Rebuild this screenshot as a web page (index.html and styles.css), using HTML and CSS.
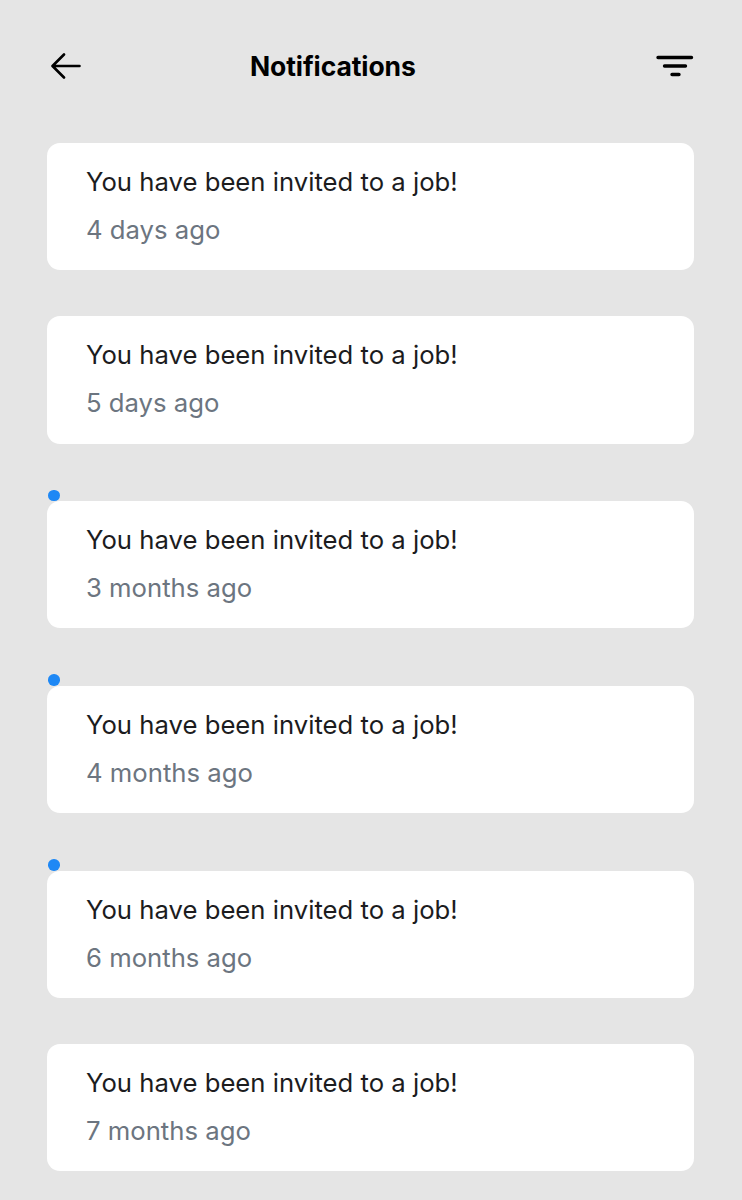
FILE: index.html
```html
<!DOCTYPE html>
<html lang="en">
<head>
  <meta charset="UTF-8" />
  <meta name="viewport" content="width=device-width, initial-scale=1" />
  <title>Notifications</title>
  <link rel="stylesheet" href="styles.css">
</head>
<body>
  <header class="topbar">
    <button class="icon-btn back" type="button" aria-label="Back">
      <svg width="30" height="26" viewBox="0 0 30 26" fill="none" stroke="#000" stroke-width="2.6" stroke-linecap="round" stroke-linejoin="round">
        <path d="M28.5 13H2M13 1.5L1.5 13L13 24.5" />
      </svg>
    </button>
    <h1>Notifications</h1>
    <button class="icon-btn filter" type="button" aria-label="Filter">
      <svg width="38" height="24" viewBox="0 0 38 24" fill="none" stroke="#000" stroke-width="3.4" stroke-linecap="round">
        <path d="M2 3.5H35.5M8.5 12H29.5M16 20.5H23" />
      </svg>
    </button>
  </header>

  <main class="list">
    <div class="item">
      <div class="card">
        <p class="title">You have been invited to a job!</p>
        <p class="time">4 days ago</p>
      </div>
    </div>
    <div class="item">
      <div class="card">
        <p class="title">You have been invited to a job!</p>
        <p class="time">5 days ago</p>
      </div>
    </div>
    <div class="item">
      <span class="dot"></span>
      <div class="card">
        <p class="title">You have been invited to a job!</p>
        <p class="time">3 months ago</p>
      </div>
    </div>
    <div class="item">
      <span class="dot"></span>
      <div class="card">
        <p class="title">You have been invited to a job!</p>
        <p class="time">4 months ago</p>
      </div>
    </div>
    <div class="item">
      <span class="dot"></span>
      <div class="card">
        <p class="title">You have been invited to a job!</p>
        <p class="time">6 months ago</p>
      </div>
    </div>
    <div class="item">
      <div class="card">
        <p class="title">You have been invited to a job!</p>
        <p class="time">7 months ago</p>
      </div>
    </div>
  </main>
</body>
</html>
```

FILE: styles.css
```css
body {
  font-family: Inter, "Noto Sans", sans-serif;
  margin: 0;
  background: #e5e5e5;
  color: #1c1c1e;
}
.topbar {
  display: flex;
  align-items: center;
  height: 50px;
  padding: 41px 48px 0 51px;
}
.icon-btn {
  background: none;
  border: none;
  padding: 0;
  display: flex;
  cursor: pointer;
}
.topbar h1 {
  margin: 0 0 0 169px;
  font-size: 26.5px;
  font-weight: 700;
  color: #000;
  letter-spacing: -0.1px;
}
.filter {
  margin-left: auto;
}
.list {
  display: flex;
  flex-direction: column;
  gap: 46px;
  padding: 52px 48px 30px 47px;
}
.item {
  display: flex;
  flex-direction: column;
}
.dot {
  width: 11.5px;
  height: 11.5px;
  border-radius: 50%;
  background: #1e88f5;
  margin-left: 1px;
}
.card {
  background: #fff;
  border-radius: 13px;
  padding: 24px 39px 25.3px;
  display: flex;
  flex-direction: column;
  gap: 18px;
}
.card p {
  margin: 0;
  font-size: 25.7px;
  line-height: 30px;
}
.title {
  color: #1c1c1e;
}
.time {
  color: #6c7580;
}
```
